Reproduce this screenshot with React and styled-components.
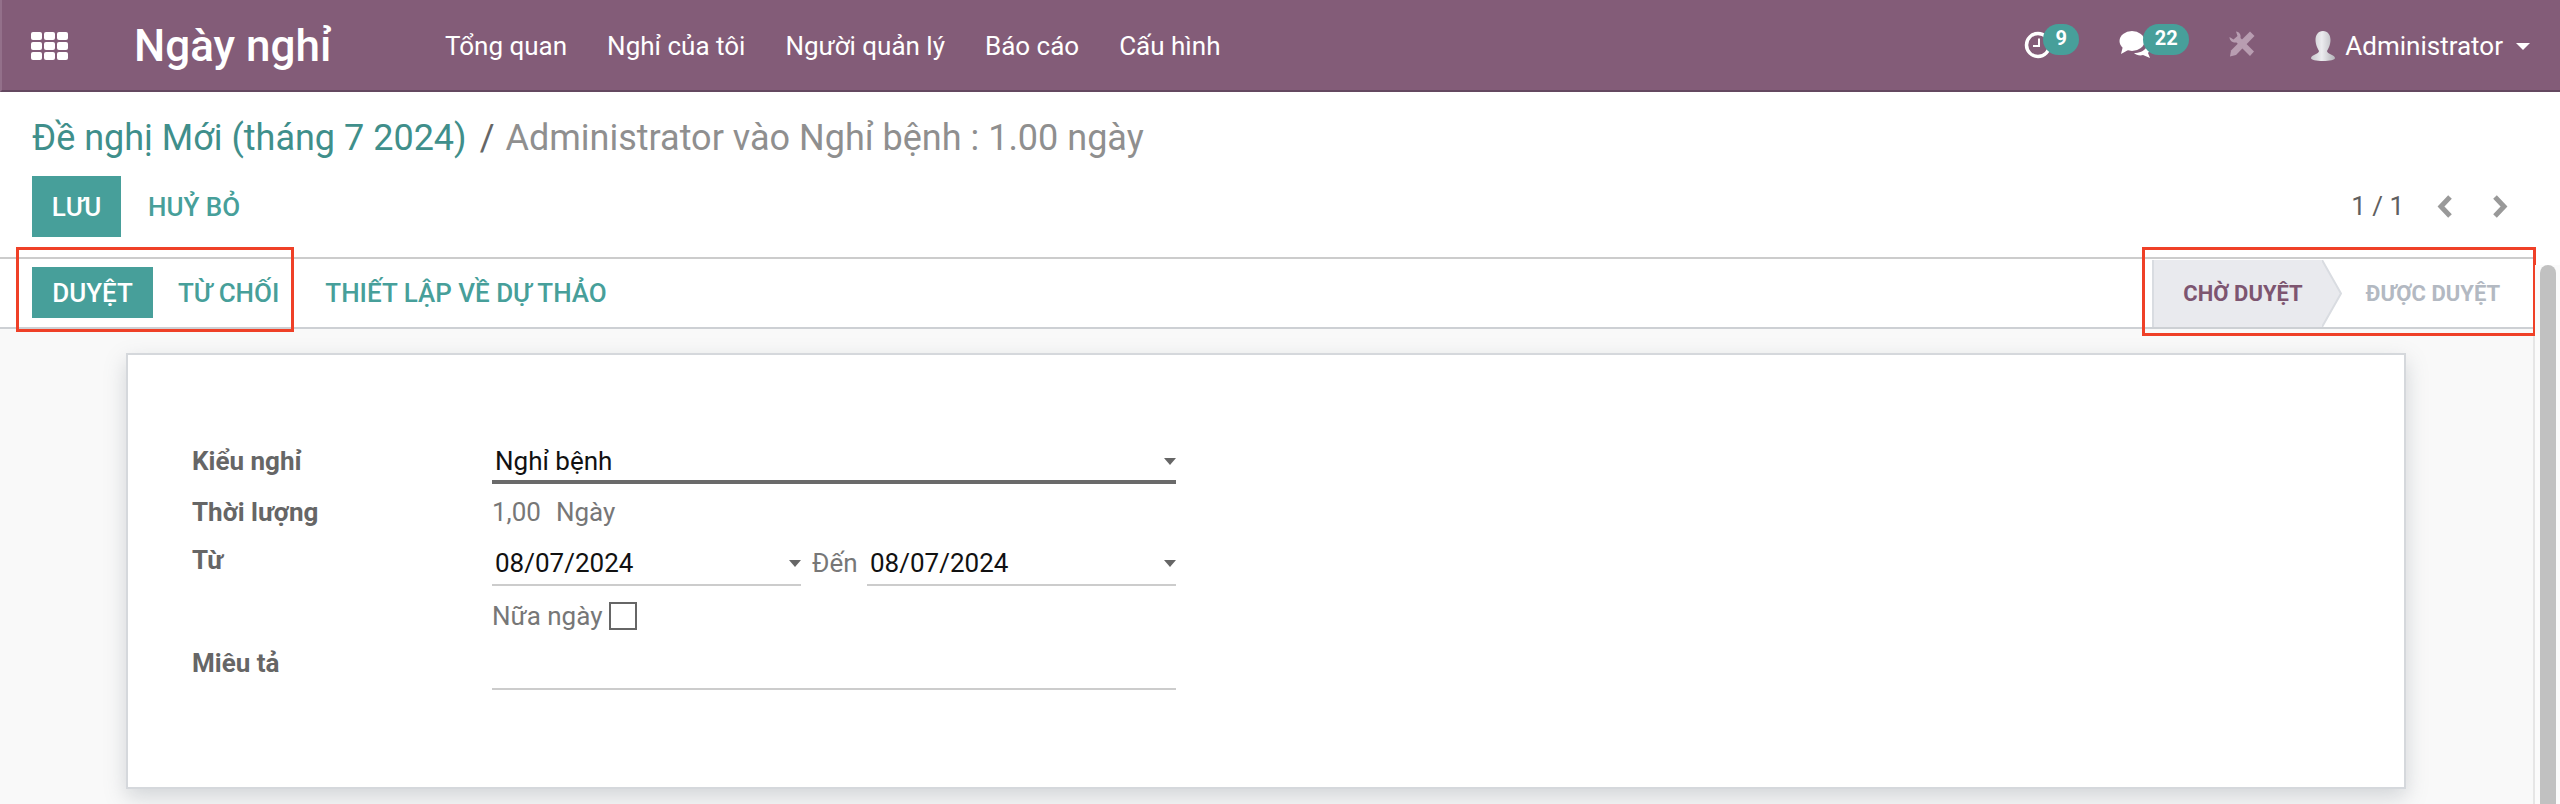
import React from "react";
import styled, { createGlobalStyle } from "styled-components";

const GlobalStyle = createGlobalStyle`
  html, body {
    margin: 0;
    height: 100%;
    overflow: hidden;
    background: #fff;
    font-family: Roboto, "Noto Sans", sans-serif;
  }
`;

const Page = styled.div`
  width: 2560px;
  height: 804px;
  overflow: hidden;
  display: flex;
  flex-direction: column;
`;

const Navbar = styled.header`
  height: 88px;
  flex: none;
  padding-top: 2px;
  display: flex;
  align-items: center;
  background: #835c78;
  border-left: 2px solid #93708a;
  border-bottom: 2px solid #644860;
  color: #fff;
`;

const AppsButton = styled.svg`
  width: 37px;
  height: 28px;
  margin-left: 29px;
`;

const Brand = styled.div`
  margin-left: 66px;
  width: 311px;
  font-size: 44px;
  font-weight: 500;
  white-space: nowrap;
`;

const Menu = styled.nav`
  display: flex;
  gap: 40px;
  font-size: 26px;
`;

const NavTools = styled.div`
  margin-left: auto;
  height: 100%;
  display: flex;
  align-items: center;
`;

const IconBadge = styled.div`
  position: relative;
  width: ${(p) => p.$w}px;
  height: 30px;
  margin-right: ${(p) => p.$mr}px;
  svg {
    display: block;
  }
`;

const Badge = styled.span`
  position: absolute;
  left: ${(p) => p.$left}px;
  top: -7px;
  width: ${(p) => p.$w}px;
  height: 31px;
  border-radius: 16px;
  background: #479f9a;
  font-size: 20px;
  font-weight: 700;
  line-height: 29px;
  text-align: center;
`;

const UserName = styled.span`
  margin-left: 10px;
  font-size: 26px;
`;

const Caret = styled.span`
  margin: 0 30px 0 13px;
  border-left: 7px solid transparent;
  border-right: 7px solid transparent;
  border-top: 7px solid #fff;
`;

const ControlPanel = styled.div`
  flex: none;
  padding: 0 52px 0 32px;
`;

const Breadcrumb = styled.div`
  height: 84px;
  display: flex;
  align-items: center;
  padding-top: 8px;
  box-sizing: border-box;
  font-size: 36px;
  color: #8f8f8f;
  white-space: nowrap;
`;

const Crumb = styled.span`
  color: #3f8f8b;
`;

const Slash = styled.span`
  margin: 0 11px 0 13px;
  color: #666;
`;

const ButtonRow = styled.div`
  height: 61px;
  display: flex;
  align-items: center;
`;

const Primary = styled.button`
  height: ${(p) => p.$h}px;
  width: ${(p) => p.$w}px;
  padding: 0;
  border: 0;
  background: #479f9a;
  color: #fff;
  font-family: inherit;
  font-size: 26px;
  font-weight: 500;
`;

const Flat = styled.button`
  padding: 0;
  margin-left: ${(p) => p.$ml}px;
  border: 0;
  background: none;
  color: #479f9a;
  font-family: inherit;
  font-size: 26px;
  font-weight: 500;
  white-space: nowrap;
`;

const Pager = styled.div`
  margin-left: auto;
  display: flex;
  align-items: center;
  font-size: 26px;
  color: #5f5f5f;
  padding-bottom: 1px;
`;

const PagerCount = styled.span`
  margin-right: 33px;
`;

const PagerChevron = styled.svg`
  width: 16px;
  height: 23px;
  margin-left: ${(p) => p.$ml || 0}px;
`;

const StatusBar = styled.div`
  flex: none;
  height: 68px;
  margin-top: 20px;
  margin-right: 27px;
  padding-left: 32px;
  display: flex;
  align-items: stretch;
  border-top: 2px solid #ccc;
  border-bottom: 2px solid #cdd0d4;
`;

const ActionRow = styled.div`
  display: flex;
  align-items: center;
  padding-bottom: 1px;
`;

const ActionGroup = styled.div`
  position: relative;
  display: flex;
  align-items: center;
`;

const Highlight = styled.div`
  position: absolute;
  left: ${(p) => p.$left}px;
  right: ${(p) => p.$right}px;
  top: ${(p) => p.$top}px;
  bottom: ${(p) => p.$bottom}px;
  border: 3px solid #ef4027;
  pointer-events: none;
`;

const Stages = styled.div`
  position: relative;
  margin-left: auto;
  display: flex;
  align-items: stretch;
  margin-top: 1px;
`;

const Stage = styled.div`
  display: flex;
  align-items: center;
  justify-content: center;
  box-sizing: border-box;
  width: ${(p) => p.$w}px;
  padding: ${(p) => (p.$active ? "0 0 0 10px" : "0 9px 0 0")};
  font-size: 22px;
  font-weight: 700;
  white-space: nowrap;
  color: ${(p) => (p.$active ? "#7d5570" : "#b3b9c2")};
  background: ${(p) => (p.$active ? "#e9eaee" : "transparent")};
  border-left: ${(p) => (p.$active ? "2px solid #d9dce1" : "0")};
`;

const StageArrow = styled.svg`
  width: 20px;
  height: 100%;
  flex: none;
  display: block;
`;

const Main = styled.div`
  flex: 1;
  min-height: 0;
  display: flex;
`;

const Content = styled.div`
  flex: 1;
  min-width: 0;
  background: #f9f9f9;
  padding: 24px 127px 0 126px;
  border-right: 2px solid #e6e6e6;
`;

const Sheet = styled.div`
  box-sizing: border-box;
  height: 436px;
  padding: 85px 64px 0;
  background: #fff;
  border: 2px solid #d5d8dc;
  box-shadow: 0 8px 20px rgba(120, 130, 140, 0.3);
`;

const FormRow = styled.div`
  display: grid;
  grid-template-columns: 300px 684px;
  height: ${(p) => p.$h}px;
  margin-bottom: ${(p) => p.$mb}px;
  font-size: 26px;
`;

const Label = styled.div`
  font-weight: 700;
  color: #666;
  line-height: ${(p) => p.$lh}px;
`;

const Field = styled.div`
  box-sizing: border-box;
  display: flex;
  align-items: center;
  justify-content: space-between;
  height: 100%;
  flex: ${(p) => (p.$half ? "1" : "none")};
  padding-left: 3px;
  padding-top: 2px;
  color: #111;
  border-bottom: ${(p) => (p.$focus ? "4px solid #6a6a6a" : "2px solid #ccc")};
`;

const DropArrow = styled.span`
  border-left: 6px solid transparent;
  border-right: 6px solid transparent;
  border-top: 7px solid #666;
`;

const DateRange = styled.div`
  display: flex;
  align-items: center;
`;

const RangeSep = styled.span`
  width: 66px;
  padding-left: 11px;
  box-sizing: border-box;
  color: #777;
`;

const Plain = styled.div`
  display: flex;
  align-items: center;
  height: 100%;
  color: #777;
`;

const Unit = styled.span`
  margin-left: 15px;
`;

const CheckBox = styled.span`
  box-sizing: border-box;
  width: 28px;
  height: 28px;
  margin-left: 7px;
  border: 2px solid #666;
`;

const ScrollTrack = styled.div`
  flex: none;
  width: 25px;
  margin-top: -64px;
  padding-left: 5px;
  box-sizing: border-box;
  background: #fbfbfb;
  position: relative;
`;

const ScrollThumb = styled.div`
  width: 16px;
  height: 600px;
  border-radius: 8px 8px 0 0;
  background: #c1c1c1;
`;

const menuItems = ["Tổng quan", "Nghỉ của tôi", "Người quản lý", "Báo cáo", "Cấu hình"];

const AppsIcon = () => (
  <AppsButton viewBox="0 0 37 28" fill="#fff">
    {[0, 13, 26].map((x) =>
      [0, 10, 20].map((y) => <rect key={`${x}-${y}`} x={x} y={y} width="11" height="8" rx="2" />)
    )}
  </AppsButton>
);

const ClockIcon = () => (
  <svg width="28" height="28" viewBox="0 0 28 28" fill="none" stroke="#fff">
    <circle cx="14" cy="14" r="11.5" strokeWidth="3.5" />
    <path d="M15 7.5v7.5h-6" strokeWidth="2" />
  </svg>
);

const ChatIcon = () => (
  <svg width="34" height="28" viewBox="0 0 34 28" fill="#fff">
    <ellipse cx="13" cy="10" rx="12.5" ry="10" />
    <path d="M4 15 L2 23 L11 18 Z" />
    <path d="M15 22 C 20 22 25 20 27 17 C 30 19 31 20 29 22 L31 27 L24 24 C 21 25 17 24 15 22 Z" />
  </svg>
);

const ToolsIcon = () => (
  <svg width="26" height="26" viewBox="0 0 26 26" fill="#b89db1">
    <path d="M21 0.5 L25.5 5 L7 24 L1 25.5 L2 19.5 Z" />
    <path d="M7 0.5 C10.5 1 12 3.5 11.5 7 L25 20.5 L21 25 L7.5 11.5 C4 12 0.5 10 0.5 6 L4.5 8.5 L8.5 5 Z" />
  </svg>
);

const AvatarIcon = () => (
  <svg width="24" height="30" viewBox="0 0 24 30">
    <defs>
      <linearGradient id="face" x1="0" y1="0" x2="1" y2="0">
        <stop offset="0" stopColor="#c9c9ce" />
        <stop offset="0.45" stopColor="#ececef" />
        <stop offset="1" stopColor="#b4b4ba" />
      </linearGradient>
    </defs>
    <path d="M12 0 C 17 0 19.5 4 19.5 9 C 19.5 14 17 18 16 20 C 16 23 24 24 24 27 C 24 29 19 30 12 30 C 5 30 0 29 0 27 C 0 24 8 23 8 20 C 7 18 4.5 14 4.5 9 C 4.5 4 7 0 12 0 Z" fill="url(#face)" />
  </svg>
);

const ChevronIcon = ({ d, ml }) => (
  <PagerChevron $ml={ml} viewBox="0 0 16 23" fill="none" stroke="#999" strokeWidth="5">
    <path d={d} />
  </PagerChevron>
);

// mũi tên ngăn giữa hai trạng thái
const ArrowTip = () => (
  <StageArrow viewBox="0 0 20 66" preserveAspectRatio="none">
    <path d="M0 0 L19 33 L0 66 Z" fill="#e9eaee" />
    <path d="M0 0 L19 33 L0 66" fill="none" stroke="#d9dce1" strokeWidth="2" />
  </StageArrow>
);

const DateField = ({ value }) => (
  <Field $half>
    {value}
    <DropArrow />
  </Field>
);

const App = () => (
  <Page>
    <GlobalStyle />
    <Navbar>
      <AppsIcon />
      <Brand>Ngày nghỉ</Brand>
      <Menu>
        {menuItems.map((item) => (
          <span key={item}>{item}</span>
        ))}
      </Menu>
      <NavTools>
        <IconBadge $w={28} $mr={67}>
          <ClockIcon />
          <Badge $left={19} $w={36}>9</Badge>
        </IconBadge>
        <IconBadge $w={34} $mr={76}>
          <ChatIcon />
          <Badge $left={24} $w={46}>22</Badge>
        </IconBadge>
        <IconBadge $w={26} $mr={56}>
          <ToolsIcon />
        </IconBadge>
        <AvatarIcon />
        <UserName>Administrator</UserName>
        <Caret />
      </NavTools>
    </Navbar>

    <ControlPanel>
      <Breadcrumb>
        <Crumb>Đề nghị Mới (tháng 7 2024)</Crumb>
        <Slash>/</Slash>
        Administrator vào Nghỉ bệnh : 1.00 ngày
      </Breadcrumb>
      <ButtonRow>
        <Primary $w={89} $h={61}>LƯU</Primary>
        <Flat $ml={27}>HUỶ BỎ</Flat>
        <Pager>
          <PagerCount>1 / 1</PagerCount>
          <ChevronIcon d="M13 2 L4 11.5 L13 21" />
          <ChevronIcon d="M3 2 L12 11.5 L3 21" ml={39} />
        </Pager>
      </ButtonRow>
    </ControlPanel>

    <StatusBar>
      <ActionRow>
        <ActionGroup>
          <Primary $w={121} $h={51}>DUYỆT</Primary>
          <Flat $ml={25}>TỪ CHỐI</Flat>
          <Highlight $left={-16} $right={-15} $top={-20} $bottom={-14} />
        </ActionGroup>
        <Flat $ml={46}>THIẾT LẬP VỀ DỰ THẢO</Flat>
      </ActionRow>
      <Stages>
        <Stage $active $w={170}>CHỜ DUYỆT</Stage>
        <ArrowTip />
        <Stage $w={191}>ĐƯỢC DUYỆT</Stage>
        <Highlight $left={-10} $right={-3} $top={-13} $bottom={-9} />
      </Stages>
    </StatusBar>

    <Main>
      <Content>
        <Sheet>
          <FormRow $h={44} $mb={6}>
            <Label $lh={42}>Kiểu nghỉ</Label>
            <Field $focus>
              Nghỉ bệnh
              <DropArrow />
            </Field>
          </FormRow>
          <FormRow $h={44} $mb={6}>
            <Label $lh={44}>Thời lượng</Label>
            <Plain>
              1,00
              <Unit>Ngày</Unit>
            </Plain>
          </FormRow>
          <FormRow $h={46} $mb={12}>
            <Label $lh={40}>Từ</Label>
            <DateRange>
              <DateField value="08/07/2024" />
              <RangeSep>Đến</RangeSep>
              <DateField value="08/07/2024" />
            </DateRange>
          </FormRow>
          <FormRow $h={36} $mb={6}>
            <div />
            <Plain>
              Nữa ngày
              <CheckBox />
            </Plain>
          </FormRow>
          <FormRow $h={50} $mb={0}>
            <Label $lh={47}>Miêu tả</Label>
            <Field />
          </FormRow>
        </Sheet>
      </Content>
      <ScrollTrack>
        <ScrollThumb />
      </ScrollTrack>
    </Main>
  </Page>
);

export default App;
